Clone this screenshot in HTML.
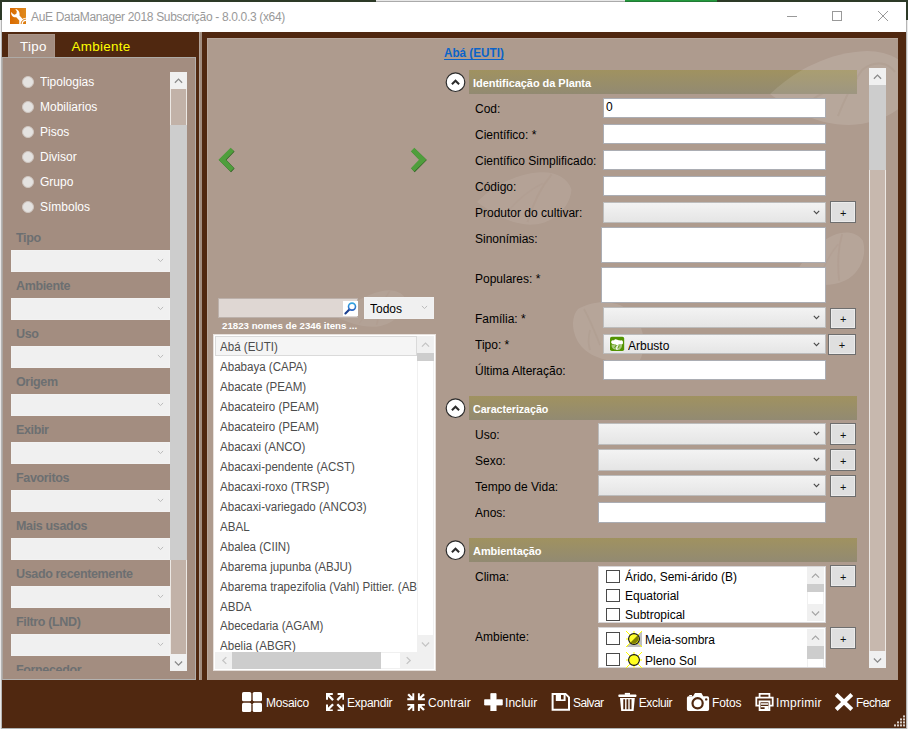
<!DOCTYPE html><html><head><meta charset="utf-8"><title>AuE DataManager 2018</title><style>
html,body{margin:0;padding:0}
body{width:908px;height:729px;position:relative;overflow:hidden;background:#fff;font-family:"Liberation Sans",sans-serif;font-size:12px;color:#000}
div,span,svg{position:absolute;box-sizing:border-box}
.t{white-space:nowrap;line-height:16px;height:16px}
.w{color:#fff}
.lb{font-size:12.5px;transform-origin:0 0;transform:scaleX(0.96)}
.gl{font-weight:bold;color:#6c6f71;font-size:12.5px;letter-spacing:-0.35px}
.cb{background:#f0f0f0;border:1px solid #f2f2f2}
.inp{background:#fff;border:1px solid #abadb3}
.cmb{background:linear-gradient(#f3f3f3,#e5e5e5);border:1px solid #bcbcbc}
.pb{background:#dfdfdf;border:1px solid #6e6e6e;box-shadow:inset 0 0 0 1px #ebebeb}
.pb span{text-align:center;font-size:11px;color:#111;line-height:16px}
.hd{background:linear-gradient(#a09260,#928a72);left:469px;width:388px;height:24px}
.hd span{left:4px;top:4.6px;color:#fff;font-weight:bold;font-size:11px;letter-spacing:-0.05px}
.chk{width:14px;height:13px;background:#fff;border:1px solid #4a4a4a}
.li{left:220px;font-size:12.5px;color:#4c4c4c;transform-origin:0 0;transform:scaleX(0.925)}
.tb{color:#fff;font-size:12px;letter-spacing:-0.1px}
.sx{transform-origin:0 0;transform:scaleX(0.96)}
</style></head><body>
<div style="left:0;top:0;width:908px;height:2px;background:#2d3a27"></div>
<div style="left:376px;top:0;width:249px;height:1px;background:#e8e8e8"></div>
<div style="left:376px;top:1px;width:249px;height:1px;background:#aaa"></div>
<div style="left:625px;top:0;width:92px;height:1px;background:#23993d"></div>
<div style="left:625px;top:1px;width:92px;height:1px;background:#227a35"></div>
<div style="left:0;top:0;width:2px;height:20px;background:#2d3a27"></div>
<div style="left:906px;top:0;width:2px;height:20px;background:#2d3a27"></div>
<div style="left:0;top:20px;width:1px;height:709px;background:#e9e9e9"></div>
<div style="left:1px;top:20px;width:1px;height:709px;background:#b5b5b5"></div>
<div style="left:906px;top:20px;width:1px;height:709px;background:#b5b5b5"></div>
<div style="left:907px;top:20px;width:1px;height:709px;background:#e9e9e9"></div>
<div style="left:2px;top:2px;width:904px;height:30px;background:#fff"></div>
<svg style="left:10px;top:8px" width="16" height="16" viewBox="0 0 16 16"><defs><linearGradient id="og" x1="0" x2="1"><stop offset="0" stop-color="#d96a00"/><stop offset="1" stop-color="#e08a1c"/></linearGradient></defs><rect width="16" height="16" fill="url(#og)"/><path d="M1.2 3.9C0.7 6.9 2.9 9.7 6.3 9.3L9.3 12.6V16H11.2L12.4 10.8L9.5 7.5C10.1 4.6 8.6 1.6 5.3 1.1L6.8 3.3L6.5 5.5L4.7 6.8L3 6.1Z" fill="#fff"/><circle cx="16" cy="16" r="6.3" fill="#fff"/><circle cx="16" cy="16" r="4.9" fill="none" stroke="#dd7d10" stroke-width="1"/><circle cx="16" cy="16" r="3.1" fill="#dd7d10"/></svg>
<span class="t" style="left:31px;top:9px;color:#999;font-size:12px;letter-spacing:-0.33px">AuE DataManager 2018 Subscrição - 8.0.0.3 (x64)</span>
<div style="left:787px;top:16px;width:10px;height:1px;background:#999"></div>
<div style="left:832px;top:11px;width:10px;height:10px;border:1px solid #999"></div>
<svg style="left:878px;top:11px" width="10" height="10" viewBox="0 0 10 10"><path d="M0 0L10 10M10 0L0 10" stroke="#999" stroke-width="1" fill="none"/></svg>
<div style="left:2px;top:32px;width:904px;height:696px;background:#502810"></div>
<div style="left:2px;top:728px;width:904px;height:1px;background:#b0b4b4"></div>
<div style="left:8px;top:34px;width:47px;height:24px;background:#a38d80;border:1px solid #a99589;border-bottom:none"></div>
<span class="t w" style="left:20px;top:38.6px;font-size:13.4px;letter-spacing:0.3px">Tipo</span>
<span class="t" style="left:71.5px;top:38.6px;font-size:13.4px;color:#ff0;letter-spacing:0.3px">Ambiente</span>
<div style="left:2px;top:57px;width:194px;height:623px;background:#a38d80;border-top:1px solid #aeaaa6;border-right:1px solid #b2afad;border-bottom:1px solid #b4b2b0;border-left:1px solid #aca6a1"></div>
<div style="left:22px;top:76px;width:12px;height:12px;border-radius:6px;background:#e4e2e0;border:1px solid #cfc6c0"></div>
<span class="t w sx" style="left:40px;top:74px;font-size:12.5px">Tipologias</span>
<div style="left:22px;top:101px;width:12px;height:12px;border-radius:6px;background:#e4e2e0;border:1px solid #cfc6c0"></div>
<span class="t w sx" style="left:40px;top:99px;font-size:12.5px">Mobiliarios</span>
<div style="left:22px;top:126px;width:12px;height:12px;border-radius:6px;background:#e4e2e0;border:1px solid #cfc6c0"></div>
<span class="t w sx" style="left:40px;top:124px;font-size:12.5px">Pisos</span>
<div style="left:22px;top:151px;width:12px;height:12px;border-radius:6px;background:#e4e2e0;border:1px solid #cfc6c0"></div>
<span class="t w sx" style="left:40px;top:149px;font-size:12.5px">Divisor</span>
<div style="left:22px;top:176px;width:12px;height:12px;border-radius:6px;background:#e4e2e0;border:1px solid #cfc6c0"></div>
<span class="t w sx" style="left:40px;top:174px;font-size:12.5px">Grupo</span>
<div style="left:22px;top:201px;width:12px;height:12px;border-radius:6px;background:#e4e2e0;border:1px solid #cfc6c0"></div>
<span class="t w sx" style="left:40px;top:199px;font-size:12.5px">Símbolos</span>
<div id="lscroll" style="left:10px;top:72px;width:177px;height:599px;overflow:hidden">
<span class="t gl" style="left:6px;top:157.5px">Tipo</span>
<div class="cb" style="left:1px;top:178px;width:159px;height:22px"></div>
<svg style="left:147px;top:186px" width="7" height="5" viewBox="0 0 7 5"><path d="M0.9 0.9L3.5 3.6L6.1 0.9" stroke="#bcbcbc" fill="none" stroke-width="1"/></svg>
<span class="t gl" style="left:6px;top:205.5px">Ambiente</span>
<div class="cb" style="left:1px;top:226px;width:159px;height:22px"></div>
<svg style="left:147px;top:234px" width="7" height="5" viewBox="0 0 7 5"><path d="M0.9 0.9L3.5 3.6L6.1 0.9" stroke="#bcbcbc" fill="none" stroke-width="1"/></svg>
<span class="t gl" style="left:6px;top:253.5px">Uso</span>
<div class="cb" style="left:1px;top:274px;width:159px;height:22px"></div>
<svg style="left:147px;top:282px" width="7" height="5" viewBox="0 0 7 5"><path d="M0.9 0.9L3.5 3.6L6.1 0.9" stroke="#bcbcbc" fill="none" stroke-width="1"/></svg>
<span class="t gl" style="left:6px;top:301.5px">Origem</span>
<div class="cb" style="left:1px;top:322px;width:159px;height:22px"></div>
<svg style="left:147px;top:330px" width="7" height="5" viewBox="0 0 7 5"><path d="M0.9 0.9L3.5 3.6L6.1 0.9" stroke="#bcbcbc" fill="none" stroke-width="1"/></svg>
<span class="t gl" style="left:6px;top:349.5px">Exibir</span>
<div class="cb" style="left:1px;top:370px;width:159px;height:22px"></div>
<svg style="left:147px;top:378px" width="7" height="5" viewBox="0 0 7 5"><path d="M0.9 0.9L3.5 3.6L6.1 0.9" stroke="#bcbcbc" fill="none" stroke-width="1"/></svg>
<span class="t gl" style="left:6px;top:397.5px">Favoritos</span>
<div class="cb" style="left:1px;top:418px;width:159px;height:22px"></div>
<svg style="left:147px;top:426px" width="7" height="5" viewBox="0 0 7 5"><path d="M0.9 0.9L3.5 3.6L6.1 0.9" stroke="#bcbcbc" fill="none" stroke-width="1"/></svg>
<span class="t gl" style="left:6px;top:445.5px">Mais usados</span>
<div class="cb" style="left:1px;top:466px;width:159px;height:22px"></div>
<svg style="left:147px;top:474px" width="7" height="5" viewBox="0 0 7 5"><path d="M0.9 0.9L3.5 3.6L6.1 0.9" stroke="#bcbcbc" fill="none" stroke-width="1"/></svg>
<span class="t gl" style="left:6px;top:493.5px">Usado recentemente</span>
<div class="cb" style="left:1px;top:514px;width:159px;height:22px"></div>
<svg style="left:147px;top:522px" width="7" height="5" viewBox="0 0 7 5"><path d="M0.9 0.9L3.5 3.6L6.1 0.9" stroke="#bcbcbc" fill="none" stroke-width="1"/></svg>
<span class="t gl" style="left:6px;top:541.5px">Filtro (LND)</span>
<div class="cb" style="left:1px;top:562px;width:159px;height:22px"></div>
<svg style="left:147px;top:570px" width="7" height="5" viewBox="0 0 7 5"><path d="M0.9 0.9L3.5 3.6L6.1 0.9" stroke="#bcbcbc" fill="none" stroke-width="1"/></svg>
<span class="t gl" style="left:6px;top:589.5px">Fornecedor</span>
</div>
<div style="left:170px;top:72px;width:17px;height:599px;background:#cdcdcd"></div>
<div style="left:170px;top:72px;width:17px;height:17px;background:#f0f0f0"></div>
<svg style="left:174px;top:77px" width="9" height="7" viewBox="0 0 9 7"><path d="M0.9 5.7L4.5 2.1L8.1 5.7" stroke="#8a8a8a" fill="none" stroke-width="1.3"/></svg>
<div style="left:170px;top:89px;width:17px;height:36px;background:#c2b2a8;border-left:1px solid #ece8e4;border-right:1px solid #ece8e4"></div>
<div style="left:170px;top:560px;width:17px;height:94px;background:#c2b2a8;border-left:1px solid #ece8e4;border-right:1px solid #ece8e4"></div>
<div style="left:170px;top:654px;width:17px;height:17px;background:#f0f0f0"></div>
<svg style="left:174px;top:660px" width="9" height="7" viewBox="0 0 9 7"><path d="M0.9 1.5L4.5 5.1L8.1 1.5" stroke="#8a8a8a" fill="none" stroke-width="1.3"/></svg>
<div style="left:199px;top:32px;width:3px;height:648px;background:#a18d7f;border-left:1px solid #b3a59b"></div>
<div style="left:207px;top:38px;width:691px;height:642px;background:#ae9b8e;border-left:1px solid #b8a89d;border-top:1px solid #b8a89d"></div>
<svg style="left:207px;top:38px" width="691" height="642" viewBox="207 38 691 642"><path d="M770 94C795 70 830 52 867 51C890 51 910 62 920 85C905 110 880 124 849 125C815 125 790 108 770 94Z" fill="#fff" fill-opacity="0.12"/><path d="M838 116C845 98 852 84 862 70M806 104C822 92 838 84 858 78M862 70C874 60 888 62 895 72" stroke="#ae9b8e" stroke-opacity="0.5" stroke-width="2" fill="none"/><g transform="translate(477 202) rotate(-3) scale(0.950 0.945) translate(0 -28)"><path d="M0 28C20 10 45 0 68 0C85 0 97 8 100 20C98 38 80 55 58 55C35 55 15 40 0 28Z" fill="#fff" fill-opacity="0.08"/><path d="M52 52C58 35 66 18 80 3" stroke="#ae9b8e" stroke-opacity="0.55" stroke-width="2.2" fill="none"/><path d="M28 44C40 30 52 20 70 12" stroke="#ae9b8e" stroke-opacity="0.4" stroke-width="1.6" fill="none"/></g><path d="M578 309C572 316 571 328 577 340C585 356 610 366 640 360C650 340 640 315 620 305C605 300 590 302 578 309Z" fill="#fff" fill-opacity="0.10"/><path d="M584 309C590 320 595 332 600 345M590 330C588 338 588 344 590 350" stroke="#ae9b8e" stroke-opacity="0.5" stroke-width="1.6" fill="none"/><g transform="translate(793 280) rotate(-25) scale(0.800 0.836) translate(0 -28)"><path d="M0 28C20 10 45 0 68 0C85 0 97 8 100 20C98 38 80 55 58 55C35 55 15 40 0 28Z" fill="#fff" fill-opacity="0.1"/><path d="M52 52C58 35 66 18 80 3" stroke="#ae9b8e" stroke-opacity="0.55" stroke-width="2.2" fill="none"/><path d="M28 44C40 30 52 20 70 12" stroke="#ae9b8e" stroke-opacity="0.4" stroke-width="1.6" fill="none"/></g><g transform="translate(338 318) rotate(-12) scale(0.700 0.618) translate(0 -28)"><path d="M0 28C20 10 45 0 68 0C85 0 97 8 100 20C98 38 80 55 58 55C35 55 15 40 0 28Z" fill="#fff" fill-opacity="0.07"/><path d="M52 52C58 35 66 18 80 3" stroke="#ae9b8e" stroke-opacity="0.55" stroke-width="2.2" fill="none"/><path d="M28 44C40 30 52 20 70 12" stroke="#ae9b8e" stroke-opacity="0.4" stroke-width="1.6" fill="none"/></g></svg>
<svg style="left:216px;top:145px" width="22" height="30" viewBox="216 145 22 30"><path d="M218.9 160.1L231 148.4L234.6 151.6L226.4 160.1L234.6 168.6L231 172.2Z" fill="#2c5a20"/><path d="M218.5 159.7L230.6 147.8L234 151.2L225.8 159.7L234 168.2L230.6 171.6Z" fill="#4f9e3c"/></svg>
<svg style="left:407px;top:145px" width="22" height="30" viewBox="407 145 22 30"><path d="M426.8 160.1L414.7 148.4L411.3 151.6L419.5 160.1L411.3 168.6L414.7 172.2Z" fill="#2c5a20"/><path d="M426.4 159.7L414.3 147.8L410.9 151.2L419.1 159.7L410.9 168.2L414.3 171.6Z" fill="#4f9e3c"/></svg>
<div style="left:218px;top:298px;width:140px;height:20px;background:#dfd7d3;border:1px solid #bcb1ab"></div>
<div style="left:343px;top:301px;width:15px;height:15px;background:#fff"></div>
<svg style="left:343px;top:301px" width="15" height="15" viewBox="0 0 15 15"><defs><linearGradient id="mg" x1="0" y1="0" x2="0" y2="1"><stop offset="0" stop-color="#34a6e2"/><stop offset="1" stop-color="#2a62c2"/></linearGradient></defs><path d="M2.4 12.4L6.6 8.2" stroke="#1b3f8f" stroke-width="2.1" stroke-linecap="round"/><circle cx="9" cy="5.6" r="3.5" fill="#fff" stroke="url(#mg)" stroke-width="1.6"/></svg>
<div class="cb" style="left:364px;top:297px;width:70px;height:22px"></div>
<span class="t sx" style="left:370px;top:301px;font-size:12.5px">Todos</span>
<svg style="left:421px;top:305px" width="7" height="5" viewBox="0 0 7 5"><path d="M0.9 0.9L3.5 3.6L6.1 0.9" stroke="#bcbcbc" fill="none" stroke-width="1"/></svg>
<span class="t w" style="left:222px;top:318px;font-size:9.7px;font-weight:bold;letter-spacing:0">21823 nomes de 2346 itens ...</span>
<div style="left:213px;top:334px;width:223px;height:337px;background:#fff;border:1px solid #e6e0dc"></div>
<div id="list" style="left:215px;top:336px;width:202px;height:316px;overflow:hidden">
<div style="left:0;top:0;width:202px;height:20px;background:#f5f5f5;border:1px solid #dadada"></div>
<span class="t li" style="left:5px;top:3.4px">Abá (EUTI)</span>
<span class="t li" style="left:5px;top:23.3px">Ababaya (CAPA)</span>
<span class="t li" style="left:5px;top:43.3px">Abacate (PEAM)</span>
<span class="t li" style="left:5px;top:63.2px">Abacateiro (PEAM)</span>
<span class="t li" style="left:5px;top:83.1px">Abacateiro (PEAM)</span>
<span class="t li" style="left:5px;top:103.0px">Abacaxi (ANCO)</span>
<span class="t li" style="left:5px;top:123.0px">Abacaxi-pendente (ACST)</span>
<span class="t li" style="left:5px;top:142.9px">Abacaxi-roxo (TRSP)</span>
<span class="t li" style="left:5px;top:162.8px">Abacaxi-variegado (ANCO3)</span>
<span class="t li" style="left:5px;top:182.8px">ABAL</span>
<span class="t li" style="left:5px;top:202.7px">Abalea (CIIN)</span>
<span class="t li" style="left:5px;top:222.6px">Abarema jupunba (ABJU)</span>
<span class="t li" style="left:5px;top:242.6px">Abarema trapezifolia (Vahl) Pittier. (ABTR)</span>
<span class="t li" style="left:5px;top:262.5px">ABDA</span>
<span class="t li" style="left:5px;top:282.4px">Abecedaria (AGAM)</span>
<span class="t li" style="left:5px;top:302.4px">Abelia (ABGR)</span>
</div>
<div style="left:417px;top:336px;width:17px;height:316px;background:#fff;border-left:1px solid #f0f0f0;border-right:1px solid #f0f0f0"></div>
<div style="left:417px;top:336px;width:17px;height:17px;background:#f0f0f0"></div>
<svg style="left:421px;top:341px" width="9" height="7" viewBox="0 0 9 7"><path d="M0.9 5.7L4.5 2.1L8.1 5.7" stroke="#c4c4c4" fill="none" stroke-width="1.2"/></svg>
<div style="left:417px;top:353px;width:17px;height:8px;background:#cdcdcd"></div>
<div style="left:417px;top:635px;width:17px;height:17px;background:#f0f0f0"></div>
<svg style="left:421px;top:641px" width="9" height="7" viewBox="0 0 9 7"><path d="M0.9 1.5L4.5 5.1L8.1 1.5" stroke="#c4c4c4" fill="none" stroke-width="1.2"/></svg>
<div style="left:215px;top:652px;width:219px;height:17px;background:#f0f0f0"></div>
<div style="left:232px;top:652px;width:149px;height:17px;background:#cdcdcd"></div>
<div style="left:381px;top:653px;width:19px;height:15px;background:#fff"></div>
<svg style="left:221px;top:656px" width="7" height="9" viewBox="0 0 7 9"><path d="M5.3 1.1L1.8 4.5L5.3 7.9" stroke="#c4c4c4" fill="none" stroke-width="1.3"/></svg>
<svg style="left:405px;top:656px" width="7" height="9" viewBox="0 0 7 9"><path d="M1.7 1.1L5.2 4.5L1.7 7.9" stroke="#c4c4c4" fill="none" stroke-width="1.3"/></svg>
<span class="t" style="left:444px;top:44.5px;font-size:12px;font-weight:bold;color:#0a63c9;text-decoration:underline;text-decoration-skip-ink:none;text-underline-offset:1.5px;transform-origin:0 0;transform:scaleX(0.975)">Abá (EUTI)</span>
<div class="hd" style="top:70px;height:24px"><span class="t" style="transform-origin:0 0;transform:scaleX(1)">Identificação da Planta</span></div>
<svg style="left:445px;top:72px" width="21" height="21" viewBox="0 0 21 21"><circle cx="10.5" cy="10.2" r="9.3" fill="#fff" stroke="#2b2b2b" stroke-width="1.2"/><path d="M6.9 12.3L10.5 8.7L14.1 12.3" stroke="#2b2b2b" stroke-width="2" fill="none"/></svg>
<svg style="left:469px;top:70px" width="388" height="24" viewBox="469 70 388 24"><path d="M770 94C795 70 830 52 867 51C890 51 910 62 920 85C905 110 880 124 849 125C815 125 790 108 770 94Z" fill="#fff" fill-opacity="0.11"/></svg>
<div class="hd" style="top:396px;height:23.5px"><span class="t" style="transform-origin:0 0;transform:scaleX(0.97)">Caracterização</span></div>
<svg style="left:445px;top:398px" width="21" height="21" viewBox="0 0 21 21"><circle cx="10.5" cy="10.2" r="9.3" fill="#fff" stroke="#2b2b2b" stroke-width="1.2"/><path d="M6.9 12.3L10.5 8.7L14.1 12.3" stroke="#2b2b2b" stroke-width="2" fill="none"/></svg>
<div class="hd" style="top:538px;height:24px"><span class="t" style="transform-origin:0 0;transform:scaleX(1)">Ambientação</span></div>
<svg style="left:445px;top:540px" width="21" height="21" viewBox="0 0 21 21"><circle cx="10.5" cy="10.2" r="9.3" fill="#fff" stroke="#2b2b2b" stroke-width="1.2"/><path d="M6.9 12.3L10.5 8.7L14.1 12.3" stroke="#2b2b2b" stroke-width="2" fill="none"/></svg>
<span class="t lb" style="left:475px;top:100.5px">Cod:</span>
<div class="inp" style="left:602.5px;top:98px;width:223px;height:20px"></div>
<span class="t lb" style="left:606px;top:99px;letter-spacing:0">0</span>
<span class="t lb" style="left:475px;top:126.5px">Científico: *</span>
<div class="inp" style="left:602.5px;top:124px;width:223px;height:20px"></div>
<span class="t lb" style="left:475px;top:152.5px">Científico Simplificado:</span>
<div class="inp" style="left:602.5px;top:150px;width:223px;height:20px"></div>
<span class="t lb" style="left:475px;top:178.5px">Código:</span>
<div class="inp" style="left:602.5px;top:176px;width:223px;height:20px"></div>
<span class="t lb" style="left:475px;top:204.5px">Produtor do cultivar:</span>
<div class="cmb" style="left:602.5px;top:201.5px;width:223px;height:21px"></div>
<svg style="left:812.9px;top:209.5px" width="7" height="5" viewBox="0 0 7 5"><path d="M0.8 0.8L3.5 3.7L6.2 0.8" stroke="#4a4a4a" fill="none" stroke-width="1.1"/></svg>
<div class="pb" style="left:830.3px;top:201px;width:25.6px;height:22px"><span class="t" style="left:0;top:2.5px;width:23.6px">+</span></div>
<span class="t lb" style="left:475px;top:230.5px">Sinonímias:</span>
<div class="inp" style="left:601px;top:227px;width:225px;height:36px"></div>
<span class="t lb" style="left:475px;top:270.5px">Populares: *</span>
<div class="inp" style="left:601px;top:267px;width:225px;height:36px"></div>
<span class="t lb" style="left:475px;top:310.8px">Família: *</span>
<div class="cmb" style="left:602.5px;top:307px;width:223px;height:21px"></div>
<svg style="left:812.9px;top:315.0px" width="7" height="5" viewBox="0 0 7 5"><path d="M0.8 0.8L3.5 3.7L6.2 0.8" stroke="#4a4a4a" fill="none" stroke-width="1.1"/></svg>
<div class="pb" style="left:830.3px;top:307.5px;width:25.6px;height:21.5px"><span class="t" style="left:0;top:2.5px;width:23.6px">+</span></div>
<span class="t lb" style="left:475px;top:336.8px">Tipo: *</span>
<div class="cmb" style="left:602.5px;top:334px;width:223px;height:20px"></div>
<svg style="left:812.9px;top:342.0px" width="7" height="5" viewBox="0 0 7 5"><path d="M0.8 0.8L3.5 3.7L6.2 0.8" stroke="#4a4a4a" fill="none" stroke-width="1.1"/></svg>
<div class="pb" style="left:828px;top:333.5px;width:28px;height:21px"><span class="t" style="left:0;top:2.5px;width:26px">+</span></div>
<svg style="left:609px;top:336px" width="16" height="16" viewBox="-1 -0.8 16 16"><rect x="-0.6" y="-0.6" width="15.4" height="15.4" rx="2.4" fill="#fff" fill-opacity="0.35"/><rect width="14.2" height="14.2" rx="1.8" fill="#529300"/><path d="M1.3 4.6C1.6 3.6 3 3.4 4 3.6C4.4 2.2 6.4 1.9 7.2 3C8.6 3.2 9.4 3.8 10.6 3.6C12 3.2 13 4 12.9 5.4C13.2 6.4 12.8 7.4 11.6 7.6C10.4 8 9.6 7.4 8.4 8C7.4 8.6 6.4 8.2 5.4 7.6C4 7.6 2.6 7.8 2 6.8C1.2 6.2 1 5.4 1.3 4.6Z" fill="#fff"/><path d="M1.6 7.6C1.2 10 2.6 12.4 5 12.8L9.6 12.9C11.4 11.8 12.2 9.8 12 7.8C9 8.6 5 8.6 1.6 7.6Z" fill="#fff" fill-opacity="0.5"/><path d="M6 12.9C5.8 11 6.4 9.6 7.4 8.4L8.6 8.6C7.8 10 8 11.6 8.4 12.9Z" fill="#fff" fill-opacity="0.85"/><path d="M4.6 11L6.2 8.4M7.6 11.6L9.4 8.8" stroke="#529300" stroke-width="0.9" fill="none"/></svg>
<span class="t lb" style="left:628px;top:337.5px">Arbusto</span>
<span class="t lb" style="left:475px;top:362.8px">Última Alteração:</span>
<div class="inp" style="left:602.5px;top:360px;width:223px;height:20px"></div>
<span class="t lb" style="left:475px;top:426.5px">Uso:</span>
<div class="cmb" style="left:598.4px;top:423px;width:227.3px;height:21.6px"></div>
<svg style="left:813.1px;top:431.0px" width="7" height="5" viewBox="0 0 7 5"><path d="M0.8 0.8L3.5 3.7L6.2 0.8" stroke="#4a4a4a" fill="none" stroke-width="1.1"/></svg>
<div class="pb" style="left:830.3px;top:423px;width:25.6px;height:22px"><span class="t" style="left:0;top:2.5px;width:23.6px">+</span></div>
<span class="t lb" style="left:475px;top:452.5px">Sexo:</span>
<div class="cmb" style="left:598.4px;top:449px;width:227.3px;height:21.6px"></div>
<svg style="left:813.1px;top:457.0px" width="7" height="5" viewBox="0 0 7 5"><path d="M0.8 0.8L3.5 3.7L6.2 0.8" stroke="#4a4a4a" fill="none" stroke-width="1.1"/></svg>
<div class="pb" style="left:830.3px;top:449px;width:25.6px;height:22px"><span class="t" style="left:0;top:2.5px;width:23.6px">+</span></div>
<span class="t lb" style="left:475px;top:478.5px">Tempo de Vida:</span>
<div class="cmb" style="left:598.4px;top:475px;width:227.3px;height:21.4px"></div>
<svg style="left:813.1px;top:483.0px" width="7" height="5" viewBox="0 0 7 5"><path d="M0.8 0.8L3.5 3.7L6.2 0.8" stroke="#4a4a4a" fill="none" stroke-width="1.1"/></svg>
<div class="pb" style="left:830.3px;top:475px;width:25.6px;height:22px"><span class="t" style="left:0;top:2.5px;width:23.6px">+</span></div>
<span class="t lb" style="left:475px;top:504.5px">Anos:</span>
<div class="inp" style="left:598.4px;top:502px;width:227.3px;height:20.5px"></div>
<span class="t lb" style="left:475px;top:568.5px">Clima:</span>
<div style="left:598.4px;top:565.5px;width:227.2px;height:57px;background:#fff;border:1px solid #d6d4d6"></div>
<div class="chk" style="left:606px;top:570.4px"></div>
<span class="t lb" style="left:625px;top:569.4px">Árido, Semi-árido (B)</span>
<div class="chk" style="left:606px;top:589.3px"></div>
<span class="t lb" style="left:625px;top:588.3px">Equatorial</span>
<div class="chk" style="left:606px;top:608.2px"></div>
<span class="t lb" style="left:625px;top:607.2px">Subtropical</span>
<div style="left:807px;top:567px;width:17px;height:54px;background:#fff;border-left:1px solid #f0f0f0;border-right:1px solid #f0f0f0"></div>
<div style="left:807px;top:567px;width:17px;height:17px;background:#f0f0f0"></div>
<svg style="left:811px;top:572px" width="9" height="7" viewBox="0 0 9 7"><path d="M0.9 5.7L4.5 2.1L8.1 5.7" stroke="#a6a6a6" fill="none" stroke-width="1.2"/></svg>
<div style="left:807px;top:584px;width:17px;height:8px;background:#cdcdcd"></div>
<div style="left:807px;top:604px;width:17px;height:17px;background:#f0f0f0"></div>
<svg style="left:811px;top:610px" width="9" height="7" viewBox="0 0 9 7"><path d="M0.9 1.5L4.5 5.1L8.1 1.5" stroke="#a6a6a6" fill="none" stroke-width="1.2"/></svg>
<div class="pb" style="left:830.3px;top:565px;width:25.6px;height:22px"><span class="t" style="left:0;top:2.5px;width:23.6px">+</span></div>
<span class="t lb" style="left:475px;top:629.0px">Ambiente:</span>
<div style="left:598.4px;top:627.4px;width:227.2px;height:40.6px;background:#fff;border:1px solid #d6d4d6"></div>
<div style="left:807px;top:629px;width:17px;height:38px;background:#fff;border-left:1px solid #f0f0f0;border-right:1px solid #f0f0f0"></div>
<div style="left:807px;top:629px;width:17px;height:17px;background:#f0f0f0"></div>
<svg style="left:811px;top:634px" width="9" height="7" viewBox="0 0 9 7"><path d="M0.9 5.7L4.5 2.1L8.1 5.7" stroke="#a6a6a6" fill="none" stroke-width="1.2"/></svg>
<div style="left:807px;top:646px;width:17px;height:13px;background:#cdcdcd"></div>
<div class="pb" style="left:830.3px;top:627px;width:25.6px;height:22px"><span class="t" style="left:0;top:2.5px;width:23.6px">+</span></div>
<div class="chk" style="left:606px;top:632.0px"></div>
<span class="t lb" style="left:644.8px;top:631.5px">Meia-sombra</span>
<div class="chk" style="left:606px;top:653.0px"></div>
<span class="t lb" style="left:644.8px;top:652.5px">Pleno Sol</span>
<svg style="left:626px;top:631px" width="16" height="16" viewBox="0 0 16 16"><path d="M16 0V16H0Z" fill="#c0c0c0"/><path d="M0 0L16 16M16 0L0 16M8 0V3M0 8H3" stroke="#ffff00" stroke-width="1"/><circle cx="8" cy="8" r="5.4" fill="#ffff30" stroke="#111" stroke-width="1.1"/><path d="M11.5 4.5A5 5 0 0 1 4.5 11.5Z" fill="#808000"/></svg>
<svg style="left:626px;top:652px" width="16" height="16" viewBox="0 0 16 16"><path d="M0 0L16 16M16 0L0 16M8 0V16M0 8H16" stroke="#ffff00" stroke-width="1"/><circle cx="8" cy="8" r="5.4" fill="#ffff20" stroke="#111" stroke-width="1.1"/></svg>
<div style="left:598px;top:668px;width:230px;height:11px;background:#ae9b8e"></div>
<div style="left:869px;top:68px;width:17px;height:600px;background:#c7b8ae;border-left:1px solid #ece8e4;border-right:1px solid #ece8e4"></div>
<div style="left:869px;top:68px;width:17px;height:17px;background:#f0f0f0"></div>
<svg style="left:873px;top:73px" width="9" height="7" viewBox="0 0 9 7"><path d="M0.9 5.7L4.5 2.1L8.1 5.7" stroke="#8a8a8a" fill="none" stroke-width="1.3"/></svg>
<div style="left:869px;top:85px;width:17px;height:85px;background:#cdcdcd"></div>
<div style="left:869px;top:651px;width:17px;height:17px;background:#f0f0f0"></div>
<svg style="left:873px;top:657px" width="9" height="7" viewBox="0 0 9 7"><path d="M0.9 1.5L4.5 5.1L8.1 1.5" stroke="#8a8a8a" fill="none" stroke-width="1.3"/></svg>
<svg style="left:242px;top:692px" width="20" height="20" viewBox="0 0 20 20"><g fill="#fff"><rect x="0" y="0" width="9.3" height="9.3" rx="1.6"/><rect x="10.7" y="0" width="9.3" height="9.3" rx="1.6"/><rect x="0" y="10.7" width="9.3" height="9.3" rx="1.6"/><rect x="10.7" y="10.7" width="9.3" height="9.3" rx="1.6"/></g></svg>
<span class="t tb" style="left:266px;top:695px;letter-spacing:-0.25px">Mosaico</span>
<svg style="left:325.8px;top:692.8px" width="18.4" height="18.4" viewBox="0 0 18.4 18.4"><g><path d="M1 6.8V1H6.8" stroke="#fff" stroke-width="2" fill="none"/><path d="M1 1H4.6L1 4.6Z" fill="#fff"/><path d="M2 2L7.1 7.1" stroke="#fff" stroke-width="2.3"/></g><g transform="translate(18.4 0) scale(-1 1)"><path d="M1 6.8V1H6.8" stroke="#fff" stroke-width="2" fill="none"/><path d="M1 1H4.6L1 4.6Z" fill="#fff"/><path d="M2 2L7.1 7.1" stroke="#fff" stroke-width="2.3"/></g><g transform="translate(0 18.4) scale(1 -1)"><path d="M1 6.8V1H6.8" stroke="#fff" stroke-width="2" fill="none"/><path d="M1 1H4.6L1 4.6Z" fill="#fff"/><path d="M2 2L7.1 7.1" stroke="#fff" stroke-width="2.3"/></g><g transform="translate(18.4 18.4) scale(-1 -1)"><path d="M1 6.8V1H6.8" stroke="#fff" stroke-width="2" fill="none"/><path d="M1 1H4.6L1 4.6Z" fill="#fff"/><path d="M2 2L7.1 7.1" stroke="#fff" stroke-width="2.3"/></g></svg>
<span class="t tb" style="left:347px;top:695px;letter-spacing:-0.25px">Expandir</span>
<svg style="left:406.8px;top:692.8px" width="18.2" height="18.2" viewBox="0 0 18.2 18.2"><g><path d="M0.3 6.3H6.3V0.3" stroke="#fff" stroke-width="1.9" fill="none"/><path d="M2.9 6.3H6.3V2.9Z" fill="#fff"/><path d="M6 6L1.2 1.2" stroke="#fff" stroke-width="2.3"/></g><g transform="translate(18.2 0) scale(-1 1)"><path d="M0.3 6.3H6.3V0.3" stroke="#fff" stroke-width="1.9" fill="none"/><path d="M2.9 6.3H6.3V2.9Z" fill="#fff"/><path d="M6 6L1.2 1.2" stroke="#fff" stroke-width="2.3"/></g><g transform="translate(0 18.2) scale(1 -1)"><path d="M0.3 6.3H6.3V0.3" stroke="#fff" stroke-width="1.9" fill="none"/><path d="M2.9 6.3H6.3V2.9Z" fill="#fff"/><path d="M6 6L1.2 1.2" stroke="#fff" stroke-width="2.3"/></g><g transform="translate(18.2 18.2) scale(-1 -1)"><path d="M0.3 6.3H6.3V0.3" stroke="#fff" stroke-width="1.9" fill="none"/><path d="M2.9 6.3H6.3V2.9Z" fill="#fff"/><path d="M6 6L1.2 1.2" stroke="#fff" stroke-width="2.3"/></g></svg>
<span class="t tb" style="left:428px;top:695px;letter-spacing:0px">Contrair</span>
<svg style="left:484px;top:693px" width="19" height="18" viewBox="0 0 19 18"><path d="M6.8 0.6h5.3v6.1h6.2v5.3h-6.2v6h-5.3v-6H0.6V6.7h6.2Z" fill="#fff" stroke="#fff" stroke-width="0.8" stroke-linejoin="round"/></svg>
<span class="t tb" style="left:505px;top:695px;letter-spacing:0.05px">Incluir</span>
<svg style="left:551px;top:692px" width="20" height="20" viewBox="0 0 20 20"><path d="M1.6 1.9H14.5L18 5.4V17.8H1.6Z" fill="none" stroke="#fff" stroke-width="2"/><path d="M4.8 2H14.6V9H4.8Z" fill="#fff"/><rect x="10" y="3" width="2.6" height="4.4" fill="#502810"/></svg>
<span class="t tb" style="left:573px;top:695px;letter-spacing:-0.6px">Salvar</span>
<svg style="left:618px;top:692px" width="19" height="20" viewBox="0 0 19 20"><path d="M6.8 0.9h5.2v2H6.8Z" fill="#fff"/><rect x="0.4" y="2.6" width="18" height="2.3" rx="0.6" fill="#fff"/><path d="M2 6H16.8L15.6 18.9H3.2Z" fill="#fff"/><path d="M6.2 7.2V17.2M9.4 7.2V17.2M12.6 7.2V17.2" stroke="#502810" stroke-width="1.8"/></svg>
<span class="t tb" style="left:638.7px;top:695px;letter-spacing:-0.35px">Excluir</span>
<svg style="left:686px;top:692px" width="24" height="20" viewBox="0 0 24 20"><path d="M2.6 4.2H7L9 0.9H15.4L17.2 4.2H21.4Q23.1 4.2 23.1 5.9V17.2Q23.1 18.9 21.4 18.9H2.6Q0.9 18.9 0.9 17.2V5.9Q0.9 4.2 2.6 4.2Z" fill="#fff"/><circle cx="11.6" cy="11.3" r="5.1" fill="#fff" stroke="#502810" stroke-width="2.2"/><circle cx="20.2" cy="7.4" r="1.2" fill="#502810"/><path d="M3.2 4.2V3H6V4.2Z" fill="#fff"/></svg>
<span class="t tb" style="left:712px;top:695px;letter-spacing:-0.1px">Fotos</span>
<svg style="left:755px;top:692px" width="19" height="20" viewBox="0 0 19 20"><path d="M4.6 5.5V1.8H14.4V5.5" fill="none" stroke="#fff" stroke-width="1.8"/><path d="M4.4 13.6H1.3V5.6H17.7V13.6H14.6" fill="none" stroke="#fff" stroke-width="1.8"/><path d="M4.6 9.4H14.4V18H4.6Z" fill="none" stroke="#fff" stroke-width="1.8"/><path d="M6 12H13M6 14.6H10" stroke="#fff" stroke-width="1.4"/><rect x="9.6" y="14" width="4" height="3.4" fill="#fff"/></svg>
<span class="t tb" style="left:776px;top:695px;letter-spacing:0.3px">Imprimir</span>
<svg style="left:834px;top:693px" width="20" height="18" viewBox="0 0 20 18"><path d="M2.2 1.5L17.8 16.5M17.8 1.5L2.2 16.5" stroke="#fff" stroke-width="4"/></svg>
<span class="t tb" style="left:856px;top:695px;letter-spacing:-0.5px">Fechar</span>
<svg style="left:894px;top:715px" width="12" height="13" viewBox="0 0 12 13"><g fill="#d9d0c9"><rect x="9" y="0.39999999999997726" width="2" height="2"/><rect x="9" y="3.3999999999999773" width="2" height="2"/><rect x="6" y="3.3999999999999773" width="2" height="2"/><rect x="9" y="6.399999999999977" width="2" height="2"/><rect x="6" y="6.399999999999977" width="2" height="2"/><rect x="3" y="6.399999999999977" width="2" height="2"/><rect x="9" y="9.399999999999977" width="2" height="2"/><rect x="6" y="9.399999999999977" width="2" height="2"/><rect x="3" y="9.399999999999977" width="2" height="2"/><rect x="0" y="9.399999999999977" width="2" height="2"/></g></svg>
</body></html>
